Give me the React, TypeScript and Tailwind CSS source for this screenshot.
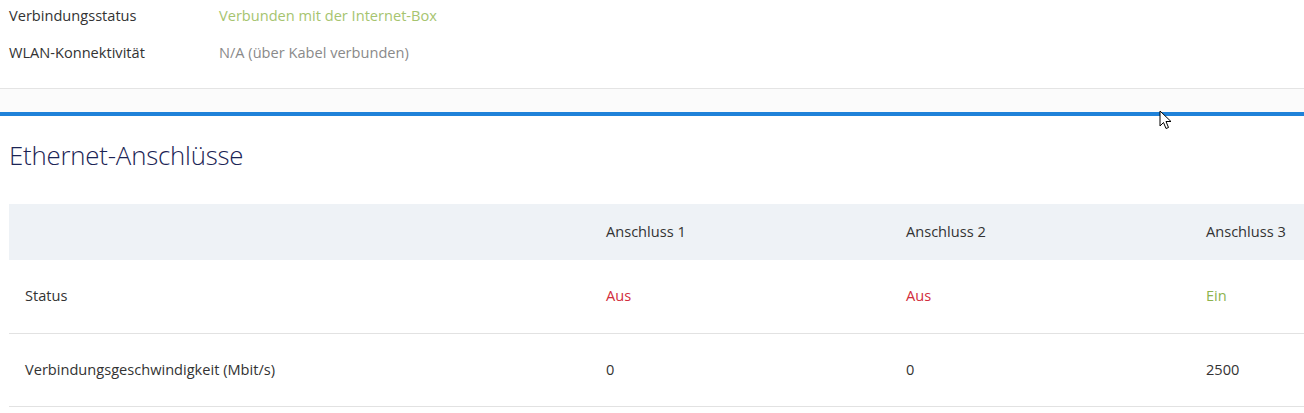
import React from "react";

const font = { fontFamily: '"Open Sans", "Noto Sans", sans-serif' };

export default function App() {
  const rows = [
    {
      label: "Status",
      cells: [
        { v: "Aus", c: "text-[#d22d3c]" },
        { v: "Aus", c: "text-[#d22d3c]" },
        { v: "Ein", c: "text-[#8db34e]" },
      ],
    },
    {
      label: "Verbindungsgeschwindigkeit (Mbit/s)",
      cells: [
        { v: "0", c: "text-[#333]" },
        { v: "0", c: "text-[#333]" },
        { v: "2500", c: "text-[#333]" },
      ],
    },
  ];
  return (
    <div className="relative w-[1304px] h-[413px] overflow-hidden bg-white text-[14.6px] text-[#333]" style={font}>
      <div className="bg-white border-b border-[#e4e4e4] shadow-[0_1px_2px_rgba(0,0,0,0.05)] h-[89px] pt-[5px]">
        <div className="flex items-center h-[22px] pl-[9px]">
          <span className="w-[210px]">Verbindungsstatus</span>
          <span className="text-[#a6c46f]">Verbunden mit der Internet-Box</span>
        </div>
        <div className="flex items-center h-[22px] pl-[9px] mt-[15px]">
          <span className="w-[210px]">WLAN-Konnektivität</span>
          <span className="text-[#8a8a8a]">N/A (über Kabel verbunden)</span>
        </div>
      </div>
      <div className="h-[23px] bg-[#fbfbfb]" />
      <div className="h-[4px] bg-[#1f82d9]" />
      <div className="pl-[9px]">
        <h2 className="text-[25.8px] font-light text-[#1b2455] h-[88px] flex items-center pb-[10px] tracking-[-0.2px]">
          Ethernet-Anschlüsse
        </h2>
        <table className="border-collapse table-fixed w-[1481px]">
          <colgroup>
            <col className="w-[581px]" />
            <col className="w-[300px]" />
            <col className="w-[300px]" />
            <col className="w-[300px]" />
          </colgroup>
          <thead>
            <tr className="bg-[#eef2f6] h-[56px]">
              <th className="text-left font-normal pl-4" />
              <th className="text-left font-normal pl-4">Anschluss 1</th>
              <th className="text-left font-normal pl-4">Anschluss 2</th>
              <th className="text-left font-normal pl-4">Anschluss 3</th>
            </tr>
          </thead>
          <tbody>
            {rows.map((r) => (
              <tr key={r.label} className="h-[73px] border-b border-[#e2e2e2]">
                <td className="pl-4">{r.label}</td>
                {r.cells.map((c, i) => (
                  <td key={i} className={`pl-4 ${c.c}`}>
                    {c.v}
                  </td>
                ))}
              </tr>
            ))}
          </tbody>
        </table>
      </div>
      <svg className="absolute left-[1159px] top-[110px]" width="14" height="20" viewBox="0 0 14 20">
        <path d="M1 1 L1 16 L4.5 12.5 L7 18.5 L9.5 17.5 L7 11.5 L12 11.5 Z" fill="white" stroke="black" strokeWidth="1" strokeLinejoin="miter" />
      </svg>
    </div>
  );
}
